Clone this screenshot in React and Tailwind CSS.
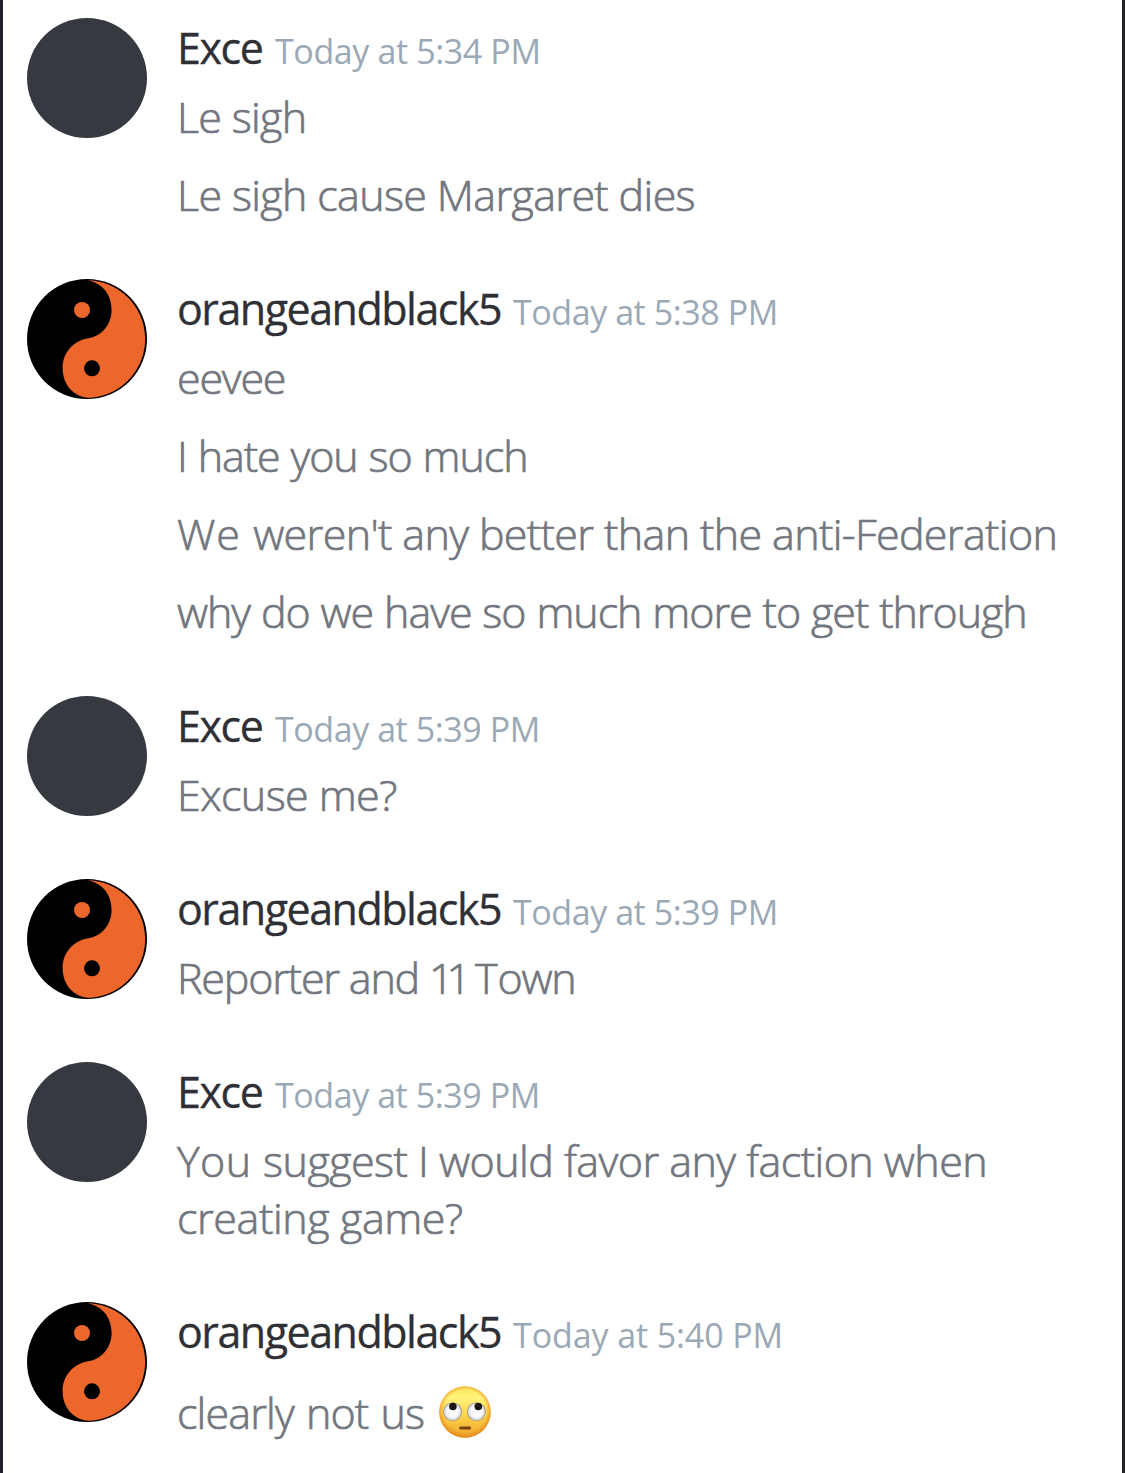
import React from 'react';

const GROUPS = [
  {
    user: 'exce',
    time: 'Today at 5:34 PM',
    timeClass: 'tracking-[-0.38px]',
    lines: [
      { text: 'Le sigh', cls: 'tracking-[-0.7px]' },
      { text: 'Le sigh cause Margaret dies', cls: 'tracking-[-0.65px]' },
    ],
  },
  {
    user: 'orange',
    time: 'Today at 5:38 PM',
    timeClass: 'tracking-[-0.43px]',
    lines: [
      { text: 'eevee', cls: 'tracking-[-1.2px]' },
      { text: 'I hate you so much', cls: 'tracking-[-1.05px] [word-spacing:0.75px]' },
      {
        text: (
          <>
            <span className="tracking-[1px]">We </span>weren't any better than the anti-Federation
          </>
        ),
        cls: 'tracking-[-0.63px]',
      },
      {
        text: 'why do we have so much more to get through',
        cls: 'tracking-[-1.05px] [word-spacing:0.8px]',
      },
    ],
  },
  {
    user: 'exce',
    time: 'Today at 5:39 PM',
    timeClass: 'tracking-[-0.43px]',
    lines: [{ text: 'Excuse me?', cls: 'tracking-[-0.58px]' }],
  },
  {
    user: 'orange',
    time: 'Today at 5:39 PM',
    timeClass: 'tracking-[-0.43px]',
    lines: [
      {
        text: (
          <>
            Reporter and <span className="tracking-[-7px]">11</span>
            <span className="tracking-[-0.2px]"> T</span>own
          </>
        ),
        cls: 'tracking-[-1.2px]',
      },
    ],
  },
  {
    user: 'exce',
    time: 'Today at 5:39 PM',
    timeClass: 'tracking-[-0.43px]',
    lines: [
      {
        text: (
          <>
            <span className="tracking-[0.4px]">You </span>suggest I would favor any faction when
          </>
        ),
        cls: 'tracking-[-0.54px]',
        rest: 'creating game?',
        restCls: 'tracking-[-0.4px]',
      },
    ],
  },
  {
    user: 'orange',
    time: 'Today at 5:40 PM',
    timeClass: 'tracking-[-0.1px]',
    lines: [{ text: 'clearly not us', cls: 'tracking-[-0.85px] [word-spacing:1.8px]', emoji: true }],
  },
];

const USERS = {
  exce: { name: 'Exce', cls: 'w-[98px] tracking-[-1.4px]' },
  orange: { name: 'orangeandblack5', cls: 'w-[336px] tracking-[-1.5px]' },
};

function YinYang() {
  return (
    <svg viewBox="0 0 120 120" className="size-[120px] shrink-0">
      <circle cx="60" cy="60" r="60" fill="#000" />
      <path
        d="M60 1.2A58.9 58.9 0 0 1 64 118.8C46 118.8 35.6 105 35.6 89C35.6 73 47 62 60 59.5C74 58 84.6 46 84.6 31C84.6 15 75 3.5 60 1.2Z"
        fill="#ed672c"
      />
      <circle cx="55" cy="31" r="8" fill="#ed672c" />
      <circle cx="65" cy="89.3" r="8" fill="#000" />
    </svg>
  );
}

function RollingEyes() {
  return (
    <svg viewBox="0 0 52 52" role="img" aria-label="face with rolling eyes" className="size-[52px] shrink-0">
      <defs>
        <linearGradient id="face" x1="0" y1="0" x2="0" y2="1">
          <stop offset="0" stopColor="#ffe45c" />
          <stop offset="0.22" stopColor="#fff47c" />
          <stop offset="0.6" stopColor="#fdd045" />
          <stop offset="1" stopColor="#eda22d" />
        </linearGradient>
        <radialGradient id="rim" cx="0.5" cy="0.48" r="0.52">
          <stop offset="0.78" stopColor="#e98f1c" stopOpacity="0" />
          <stop offset="1" stopColor="#df801a" stopOpacity="0.8" />
        </radialGradient>
        <radialGradient id="eye" cx="0.5" cy="0.5" r="0.5">
          <stop offset="0.6" stopColor="#fafafc" />
          <stop offset="0.86" stopColor="#d9d9df" />
          <stop offset="1" stopColor="#77777c" />
        </radialGradient>
      </defs>
      <circle cx="26" cy="26" r="25.8" fill="url(#face)" />
      <circle cx="26" cy="26" r="25.8" fill="url(#rim)" />
      <circle cx="13.6" cy="25.7" r="9.3" fill="url(#eye)" />
      <circle cx="37.4" cy="25.7" r="9.3" fill="url(#eye)" />
      <circle cx="13.9" cy="20.5" r="3.8" fill="#1e1612" />
      <circle cx="39.3" cy="20.5" r="3.8" fill="#1e1612" />
      <rect x="20.3" y="40.5" width="11.6" height="3" rx="1.2" fill="#76400f" />
    </svg>
  );
}

function Line({ line }) {
  return (
    <div className="text-[43px] leading-[57px] font-light whitespace-nowrap text-[#72767e] [-webkit-text-stroke:0.7px_#72767e]">
      {line.emoji ? (
        <div className="mt-3 flex items-center gap-[15px]">
          <p className={line.cls}>{line.text}</p>
          <div className="-mt-0.5">
            <RollingEyes />
          </div>
        </div>
      ) : (
        <p className={line.cls}>{line.text}</p>
      )}
      {line.rest && <p className={line.restCls}>{line.rest}</p>}
    </div>
  );
}

function Message({ group }) {
  const user = USERS[group.user];
  return (
    <article className="flex items-start gap-[30px]">
      {group.user === 'orange' ? (
        <YinYang />
      ) : (
        <div className="size-[120px] shrink-0 rounded-full bg-[#36393f]" />
      )}
      <div className="flex min-w-0 flex-col gap-3 pt-px">
        <header className="flex h-[57px] items-baseline leading-[57px] whitespace-nowrap">
          <h2 className={`shrink-0 text-[43px] font-normal text-[#2e3035] [-webkit-text-stroke:0.3px_#2e3035] ${user.cls}`}>
            {user.name}
          </h2>
          <time className={`text-[34px] text-[#9ba9b6] ${group.timeClass}`}>{group.time}</time>
        </header>
        <div className="flex flex-col gap-[21px]">
          {group.lines.map((line, i) => (
            <Line key={i} line={line} />
          ))}
        </div>
      </div>
    </article>
  );
}

export default function App() {
  return (
    <main className="flex h-[1473px] w-[1125px] flex-col gap-14 overflow-hidden border-x-[3px] border-[#202227] bg-white pt-[18px] pl-6 font-['Open_Sans',sans-serif]">
      {GROUPS.map((group, i) => (
        <Message key={i} group={group} />
      ))}
    </main>
  );
}
